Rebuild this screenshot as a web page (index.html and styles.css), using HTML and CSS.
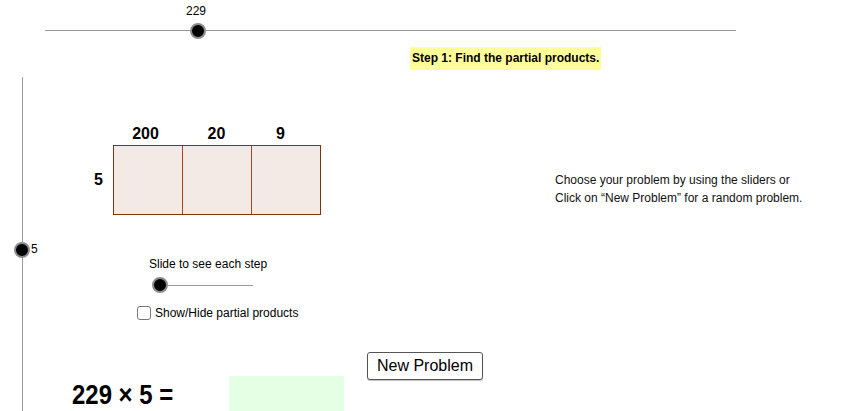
FILE: index.html
```html
<!DOCTYPE html>
<html>
<head>
<meta charset="utf-8">
<link rel="stylesheet" href="styles.css">
</head>
<body>
<div class="applet">
  <div class="hslider">
    <div class="track"></div>
    <div class="knob"></div>
    <span class="val">229</span>
  </div>

  <div class="step">Step 1: Find the partial products.</div>

  <div class="vslider">
    <div class="track"></div>
    <div class="knob"></div>
    <span class="val">5</span>
  </div>

  <div class="area">
    <div class="toplabels">
      <span class="l1">200</span>
      <span class="l2">20</span>
      <span class="l3">9</span>
    </div>
    <div class="row">
      <span class="side">5</span>
      <div class="cells">
        <div class="cell"></div>
        <div class="cell"></div>
        <div class="cell"></div>
      </div>
    </div>
  </div>

  <div class="info">
    <p>Choose your problem by using the sliders or</p>
    <p>Click on “New Problem” for a random problem.</p>
  </div>

  <div class="stepper">
    <div class="caption">Slide to see each step</div>
    <div class="mini">
      <div class="knob"></div>
      <div class="track"></div>
    </div>
    <label class="check"><span class="box"></span>Show/Hide partial products</label>
  </div>

  <button class="newbtn">New Problem</button>

  <div class="equation">229 × 5 =</div>
  <div class="answer"></div>
</div>
</body>
</html>
```

FILE: styles.css
```css
html, body {
  margin: 0;
  padding: 0;
  background: #fff;
  overflow: hidden;
}
.applet {
  position: relative;
  width: 850px;
  height: 411px;
  font-family: "Liberation Sans", Arial, sans-serif;
  color: #000;
}

/* horizontal slider */
.hslider {
  position: absolute;
  left: 45px;
  top: 22px;
  width: 691px;
  height: 18px;
}
.hslider .track {
  position: absolute;
  left: 0;
  right: 0;
  top: 8px;
  height: 1px;
  background: #9a9a9a;
}
.knob {
  width: 12px;
  height: 12px;
  border-radius: 50%;
  background: #000;
  border: 2px solid #8c8c8c;
  box-sizing: content-box;
}
.hslider .knob {
  position: absolute;
  left: 145px;
  top: 1px;
}
.hslider .val {
  position: absolute;
  left: 141px;
  top: -18px;
  font-size: 12px;
}

.step {
  position: absolute;
  left: 410px;
  top: 47px;
  width: 191px;
  height: 23px;
  box-sizing: border-box;
  padding: 4px 0 0 2px;
  background: #ffff99;
  font-size: 12px;
  font-weight: bold;
  white-space: nowrap;
}

/* vertical slider */
.vslider {
  position: absolute;
  left: 13px;
  top: 77px;
  width: 30px;
  height: 334px;
}
.vslider .track {
  position: absolute;
  left: 9px;
  top: 0;
  bottom: 0;
  width: 1px;
  background: #9a9a9a;
}
.vslider .knob {
  position: absolute;
  left: 1px;
  top: 165px;
}
.vslider .val {
  position: absolute;
  left: 18px;
  top: 165px;
  font-size: 12px;
}

/* area model */
.area {
  position: absolute;
  left: 90px;
  top: 125px;
}
.toplabels {
  display: grid;
  grid-template-columns: 69px 69px 69px;
  margin-left: 23px;
  height: 20px;
  font-size: 16px;
  font-weight: bold;
}
.toplabels span { text-align: center; }
.toplabels .l1 { padding-right: 4px; }
.toplabels .l2 { padding-right: 0; }
.toplabels .l3 { padding-right: 10px; }
.row {
  display: flex;
  align-items: center;
}
.side {
  width: 23px;
  padding-left: 4px;
  box-sizing: border-box;
  font-size: 16px;
  font-weight: bold;
}
.cells {
  display: grid;
  grid-template-columns: 68px 69px 69px;
  border: 1.5px solid #7e3310;
  background: #f4eae5;
}
.cell {
  height: 68px;
  border-left: 1.5px solid #a4461c;
}
.cell:first-child { border-left: none; }

/* info */
.info {
  position: absolute;
  left: 555px;
  top: 171px;
  font-size: 12px;
  line-height: 18px;
  color: #111;
}
.info p { margin: 0; }

/* stepper */
.stepper {
  position: absolute;
  left: 136px;
  top: 257px;
  font-size: 12px;
}
.caption { padding-left: 13px; }
.mini {
  display: flex;
  align-items: center;
  margin: 6px 0 0 16px;
}
.mini .track {
  width: 86px;
  height: 1px;
  background: #9a9a9a;
  margin-left: -1px;
}
.check {
  display: flex;
  align-items: center;
  gap: 4px;
  margin-top: 13px;
  margin-left: 1px;
}
.check .box {
  width: 12px;
  height: 12px;
  border: 1px solid #777;
  border-radius: 3px;
  background: #fff;
}

.newbtn {
  position: absolute;
  left: 367px;
  top: 352px;
  width: 116px;
  height: 28px;
  padding: 0;
  font-family: "Liberation Sans", Arial, sans-serif;
  font-size: 16px;
  color: #000;
  background: #fff;
  border: 1px solid #555;
  border-radius: 3px;
  box-shadow: 0 1px 1px rgba(0,0,0,0.25);
}

.equation {
  position: absolute;
  left: 72px;
  top: 379px;
  font-size: 28px;
  font-weight: bold;
  line-height: 32px;
  white-space: nowrap;
  transform: scaleX(0.855);
  transform-origin: left center;
}
.answer {
  position: absolute;
  left: 229px;
  top: 376px;
  width: 115px;
  height: 35px;
  background: #e5ffe5;
}
```
